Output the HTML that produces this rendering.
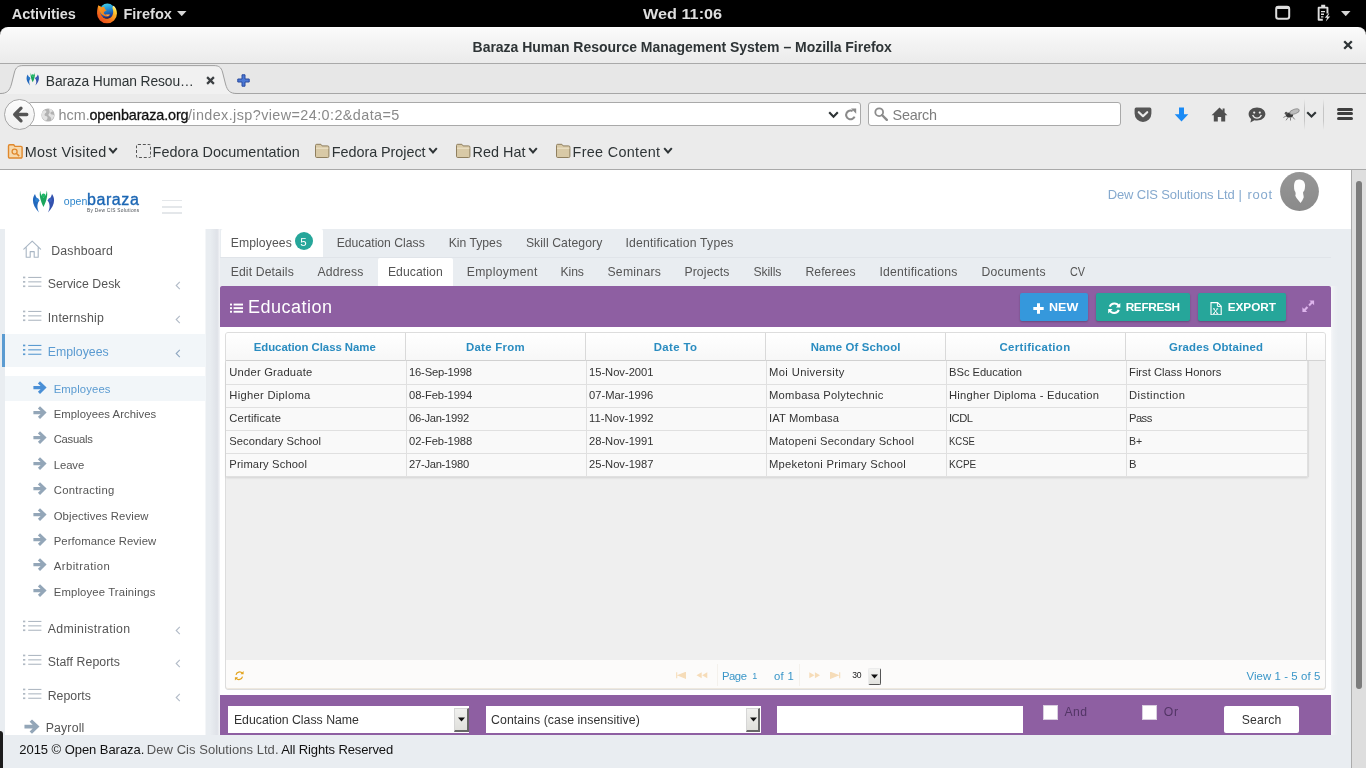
<!DOCTYPE html>
<html lang="en">
<head>
<meta charset="utf-8">
<title>Baraza Human Resource Management System</title>
<style>
html,body{margin:0;padding:0;}
body{width:1366px;height:768px;overflow:hidden;position:relative;background:#e9edf2;font-family:"Liberation Sans",sans-serif;}
div,svg,span{position:absolute;box-sizing:border-box;}
.t{white-space:nowrap;line-height:1;font-family:"Liberation Sans",sans-serif;}
#L{left:0;top:0;width:1366px;height:768px;will-change:transform;}
</style>
</head>
<body>
<div id="L">
<div style="left:0px;top:0px;width:1366px;height:40px;background:#000;"></div>
<span class="t" style="left:11.78px;top:7.18px;font-size:14.5px;color:#dedede;font-weight:700;letter-spacing:-0.042px;">Activities</span><span class="t" style="left:123.48px;top:7.18px;font-size:14.5px;color:#dedede;font-weight:700;letter-spacing:0.010px;">Firefox</span><span class="t" style="left:643.48px;top:7.18px;font-size:14.5px;color:#dedede;font-weight:700;transform:scaleX(1.1193);transform-origin:0 0;">Wed 11:06</span><svg style="left:97px;top:2.5px;" width="21" height="21" viewBox="0 0 21 21">
<defs>
<linearGradient id="ffo" x1="0.1" y1="0.95" x2="0.95" y2="0.1"><stop offset="0" stop-color="#e8431c"/><stop offset="0.4" stop-color="#f4731c"/><stop offset="0.72" stop-color="#fbb024"/><stop offset="0.9" stop-color="#ffe34a"/><stop offset="1" stop-color="#fffbe0"/></linearGradient>
<linearGradient id="ffb" x1="0.35" y1="0" x2="0.6" y2="1"><stop offset="0" stop-color="#3fd0ec"/><stop offset="0.45" stop-color="#1c86d0"/><stop offset="0.8" stop-color="#1b3f9a"/><stop offset="1" stop-color="#141a55"/></linearGradient>
<linearGradient id="ffh" x1="0" y1="0" x2="1" y2="1"><stop offset="0" stop-color="#f8a11f"/><stop offset="1" stop-color="#f0701b"/></linearGradient>
</defs>
<circle cx="10.400" cy="8.100" r="7.700" fill="url(#ffb)"/>
<path d="M1.300 2.600 C2.500 3 3.600 3.500 4.500 4.400 C3 6.200 2.800 9 4 11.400 C5.200 14 7.600 15.700 10.200 15.700 C13 15.700 15.200 13.800 15.900 11 C16.400 9 16.300 7 15.500 5.200 C15.300 4.200 15.800 3.200 16.700 2.700 C18.700 4.500 19.950 7.300 19.950 10.400 A9.950 9.950 0 0 1 10 20.350 A9.950 9.950 0 0 1 0.050 10.400 C0.050 7.600 0.450 4.800 1.300 2.600Z" fill="url(#ffo)"/>
<path d="M1.300 2.600 C2.600 3 3.700 3.600 4.600 4.400 C5.600 3.700 6.700 3.700 7.500 4.100 C7.300 5 7.700 5.800 8.400 6.400 L9.700 7.200 C8.700 7.900 7.400 8.300 6.800 9.400 C6.600 10.600 7.600 11.400 9 11.600 C10.600 11.800 12 11.200 13 11.700 C12.200 13.300 10.400 13.900 8.600 13.500 C6.400 13 4.600 11.600 3.400 9.600 C2.400 7.600 1.500 5.200 1.300 2.600Z" fill="url(#ffh)"/>
<path d="M8.800 11.700 C10.400 12 11.900 11.500 12.900 11.800 C12.300 12.400 11.200 12.700 10.200 12.600Z" fill="#ffe07a"/>
</svg>
<svg style="left:177.3px;top:10.8px;" width="9.5" height="5.2" viewBox="0 0 9.5 5.2"><path d="M0 0H9.500L4.750 5.200Z" fill="#d6d6d6"/></svg>
<svg style="left:1275px;top:5px;" width="16" height="15" viewBox="0 0 16 15"><rect x="1.2" y="1.8" width="13" height="12" rx="2.2" fill="none" stroke="#dedede" stroke-width="2"/><rect x="1.2" y="1" width="13" height="3" rx="1.5" fill="#dedede"/></svg>
<svg style="left:1316px;top:4px;" width="16" height="18" viewBox="0 0 16 18"><path d="M5.2 0.8h4v2h2.2a1 1 0 0 1 1 1v5.8h-1.9V4.6H3.6v10.2h3.2v1.9H2.7a1 1 0 0 1-1-1V3.8a1 1 0 0 1 1-1h2.5z" fill="#dedede"/><path d="M5 7h4v1.3H5zM5 9.6h3v1.3H5zM5 12.2h2.4v1.2H5z" fill="#dedede"/><path d="M12.4 9.6l-3.6 4.2h2.3l-1.3 3.6 4.4-4.8h-2.5l1.6-3z" fill="#dedede"/></svg>
<svg style="left:1341.3px;top:10.8px;" width="9.5" height="5.2" viewBox="0 0 9.5 5.2"><path d="M0 0H9.500L4.750 5.200Z" fill="#d6d6d6"/></svg>
<div style="left:0px;top:27px;width:1366px;height:36px;background:linear-gradient(#fbfbfb,#f3f3f3 45%,#ebebeb);border-radius:8px 8px 0 0;border-top:1px solid #fff;"></div>
<div style="left:0px;top:63px;width:1366px;height:1px;background:#a9a9a9;"></div>
<span class="t" style="left:472.60px;top:39.60px;font-size:14px;color:#2e3436;font-weight:700;letter-spacing:-0.030px;">Baraza Human Resource Management System – Mozilla Firefox</span><svg style="left:1343px;top:40px;" width="10" height="10" viewBox="0 0 10 10"><path d="M1.2 1.2L8.8 8.8M8.8 1.2L1.2 8.8" stroke="#2e3436" stroke-width="2.3" fill="none"/></svg>
<div style="left:0px;top:64px;width:1366px;height:29px;background:#e7e7e7;"></div>
<div style="left:0px;top:93px;width:1366px;height:1px;background:#a6a6a6;"></div>
<svg style="left:0px;top:64px;" width="240" height="31" viewBox="0 0 240 31">
<path d="M0 29.5 C7 29.5 9.5 27 11.5 20 L14.5 8 C15.8 3.5 18 1.6 23 1.6 L214 1.6 C219 1.6 221.2 3.5 222.5 8 L225.5 20 C227.5 27 230 29.5 237 29.5 L240 29.5 L240 31 L0 31 Z" fill="#f1f1f1"/>
<path d="M0 29.5 C7 29.5 9.5 27 11.5 20 L14.5 8 C15.8 3.5 18 1.6 23 1.6 L214 1.6 C219 1.6 221.2 3.5 222.5 8 L225.5 20 C227.5 27 230 29.5 237 29.5 L240 29.5" fill="none" stroke="#9f9f9f" stroke-width="1"/>
</svg>
<svg style="left:26px;top:72.3px;" width="13.5" height="14" viewBox="0 0 23 23"><path d="M3 4 C-0.600 8.800 0.400 16.200 7 22.400 C4.600 17.600 5 13.400 7.600 10.200 C5.600 9.400 3.800 7.200 3 4Z" fill="#2268bd"/>
<circle cx="4.900" cy="10" r="2.100" fill="#2b7fd0"/>
<path d="M20 4 C23.600 8.800 22.600 16.200 16 22.400 C18.400 17.600 18 13.400 15.400 10.200 C17.400 9.400 19.200 7.200 20 4Z" fill="#3352ae"/>
<circle cx="18.100" cy="10" r="2.100" fill="#3b60bd"/>
<path d="M8.200 0.800 C8.600 4.400 9.800 6.800 11.500 7.400 C13.200 6.800 14.400 4.400 14.800 0.400 C16.200 5.800 14 11.800 11.500 17 C9 11.800 6.800 5.800 8.200 0.800Z" fill="#1aa55c"/>
<circle cx="11.500" cy="5.600" r="2.200" fill="#1fb868"/></svg>
<span class="t" style="left:45.81px;top:74.77px;font-size:13.8px;color:#2e3436;letter-spacing:-0.084px;">Baraza Human Resou…</span><svg style="left:206px;top:76px;" width="9" height="9" viewBox="0 0 9 9"><path d="M1.1 1.1L7.9 7.9M7.9 1.1L1.1 7.9" stroke="#3c4043" stroke-width="2.2" fill="none"/></svg>
<svg style="left:236.5px;top:73.5px;" width="13" height="13" viewBox="0 0 13 13"><path d="M5 0.8h3v4.2h4.2v3H8v4.2H5V8H0.8V5H5z" fill="#4a78d6" stroke="#2a4a9e" stroke-width="1" stroke-linejoin="round"/></svg>
<div style="left:0px;top:94px;width:1366px;height:41px;background:#ebebeb;"></div>
<div style="left:28px;top:102px;width:833px;height:24px;background:#fff;border:1px solid #a9a9a9;border-radius:3px;"></div>
<div style="left:4px;top:98.5px;width:31px;height:31px;background:linear-gradient(#fdfdfd,#efefef);border:1px solid #a8a8a8;border-radius:50%;"></div>
<svg style="left:11.5px;top:104.5px;" width="19" height="19" viewBox="0 0 19 19"><path d="M14.800 9.500H3.600M9 3.200L2.700 9.500L9 15.800" stroke="#555" stroke-width="3.300" fill="none" stroke-linecap="round" stroke-linejoin="round"/></svg>
<svg style="left:41px;top:107.5px;" width="14" height="14" viewBox="0 0 14 14"><circle cx="7" cy="7" r="6.6" fill="#b2b2b2"/><path d="M3 2.2c1.4-.2 2.6.6 2.4 1.8-.2 1-1.6 1.2-1.8 2.4-.2 1 .8 1.6 1.8 1.8 1 .2 1.4 1.2 1 2.4-.3.9-1 1.6-1.4 2.2C2.6 12 .6 9.6.6 7c0-2 1-3.800 2.400-4.800zM8.200.8c1.600.2 3 1.200 3.800 2.400-.8.600-1.800.400-2.400 1.200-.600.800.200 1.800 1.200 2 .8.200 1.800.200 2.400.800-.200 2-1.400 3.800-3.200 4.800.400-1.200.200-2.200-.600-3-.8-.8-2-1-2-2.200 0-1 1-1.400 1.200-2.400C8.800 3.200 8 2.200 8.200.8z" fill="#e2e2e2"/></svg>
<span class="t" style="left:58.58px;top:108.01px;font-size:14.4px;color:#8a8a8a;letter-spacing:0.036px;">hcm.</span><span class="t" style="left:89.48px;top:108.01px;font-size:14.4px;color:#111;letter-spacing:-0.132px;-webkit-text-stroke:0.3px #111;">openbaraza.org</span><span class="t" style="left:187.88px;top:108.01px;font-size:14.4px;color:#8a8a8a;letter-spacing:0.406px;">/index.jsp?view=24:0:2&amp;data=5</span><svg style="left:828px;top:110.5px;" width="11" height="8" viewBox="0 0 11 8"><path d="M1.2 1.2L5.5 5.8L9.8 1.2" stroke="#2e3436" stroke-width="2.1" fill="none"/></svg>
<svg style="left:843.5px;top:107.5px;" width="13" height="13" viewBox="0 0 13 13"><path d="M10.6 8.6A4.4 4.4 0 1 1 8.6 3" stroke="#8a8a8a" stroke-width="2" fill="none"/><path d="M7 0.6h5.2v5.200z" fill="#8a8a8a"/></svg>
<div style="left:868px;top:102px;width:253px;height:24px;background:#fff;border:1px solid #a9a9a9;border-radius:3px;"></div>
<svg style="left:873.5px;top:107px;" width="14" height="14" viewBox="0 0 14 14"><circle cx="5.2" cy="5.2" r="3.9" stroke="#8c8c8c" stroke-width="1.8" fill="none"/><path d="M8 8L12.8 12.8" stroke="#8c8c8c" stroke-width="2.4" stroke-linecap="round"/></svg>
<span class="t" style="left:892.58px;top:107.81px;font-size:14.4px;color:#7d7d7d;letter-spacing:-0.223px;">Search</span><svg style="left:1134px;top:107px;" width="18" height="15" viewBox="0 0 18 15"><path d="M2.2 0.6h13.600a1.600 1.600 0 0 1 1.600 1.600v4.300a8.400 8.400 0 0 1-16.800 0V2.200A1.600 1.600 0 0 1 2.200.6z" fill="#565656"/><path d="M4.800 5.200L9 9.200L13.200 5.200" stroke="#ebebeb" stroke-width="2.2" fill="none" stroke-linecap="round" stroke-linejoin="round"/></svg>
<svg style="left:1173.5px;top:107px;" width="15" height="15" viewBox="0 0 15 15"><path d="M5 0.4h5v6.800h4.300L7.500 14.600L.7 7.200H5z" fill="#1a8af5"/></svg>
<svg style="left:1210.5px;top:107px;" width="17" height="15" viewBox="0 0 17 15"><path d="M8.500.6L.6 8.200h2.200v6.400h4V10h3.400v4.600h4V8.200h2.200L13.600 5.600V1.600h-2v2z" fill="#4f4f4f"/></svg>
<svg style="left:1248px;top:107px;" width="18" height="16" viewBox="0 0 18 16"><path d="M9 .6c4.600 0 8.400 2.900 8.400 6.500S13.600 13.600 9 13.600c-.9 0-1.800-.1-2.600-.300L2.400 15.600l.8-3.500C1.600 10.900.6 9.100.6 7.100.6 3.500 4.400.6 9 .6z" fill="#4f4f4f"/><circle cx="6.200" cy="5.600" r="1.100" fill="#ebebeb"/><circle cx="11.800" cy="5.600" r="1.100" fill="#ebebeb"/><path d="M4.600 8c1 2.200 2.600 3.200 4.400 3.200s3.400-1 4.400-3.200" stroke="#ebebeb" stroke-width="1.300" fill="none"/></svg>
<svg style="left:1283px;top:107px;" width="18" height="14" viewBox="0 0 18 14"><ellipse cx="6.500" cy="8" rx="3.600" ry="2.600" fill="#3a3a3a"/><ellipse cx="11.500" cy="4.600" rx="5" ry="2.300" fill="#bdbdbd" stroke="#777" stroke-width=".6" transform="rotate(-18 11.500 4.600)"/><circle cx="3.200" cy="6.200" r="1.500" fill="#555"/><path d="M5 10.500l-2 2.800M7.500 10.700l0 2.800M9.500 9.800l2.200 2.600M3 9l-2.600 1.500" stroke="#666" stroke-width=".8" fill="none"/></svg>
<div style="left:1304px;top:99px;width:1px;height:31px;background:linear-gradient(rgba(0,0,0,0),#c6c6c6 30%,#c6c6c6 70%,rgba(0,0,0,0));"></div>
<svg style="left:1305.5px;top:110.5px;" width="11" height="8" viewBox="0 0 11 8"><path d="M1.200 1.200L5.500 5.600L9.800 1.200" stroke="#2e3436" stroke-width="2.100" fill="none"/></svg>
<div style="left:1323px;top:99px;width:1px;height:31px;background:linear-gradient(rgba(0,0,0,0),#c6c6c6 30%,#c6c6c6 70%,rgba(0,0,0,0));"></div>
<div style="left:1337px;top:107.5px;width:16px;height:3px;background:#3f3f3f;border-radius:1.5px;"></div>
<div style="left:1337px;top:112.3px;width:16px;height:3px;background:#3f3f3f;border-radius:1.5px;"></div>
<div style="left:1337px;top:117.1px;width:16px;height:3px;background:#3f3f3f;border-radius:1.5px;"></div>
<div style="left:0px;top:135px;width:1366px;height:34px;background:#ebebeb;"></div>
<div style="left:0px;top:169px;width:1366px;height:1px;background:#a9a9a9;"></div>
<svg style="left:6.5px;top:142.6px;" width="17" height="16" viewBox="0 0 17 16"><path d="M1.500 3a1.200 1.200 0 0 1 1.200-1.200h4l1.200 1.600h6a1.200 1.200 0 0 1 1.200 1.200v9.200a1.200 1.200 0 0 1-1.200 1.200H2.700a1.200 1.200 0 0 1-1.200-1.200z" fill="#f7d9ad" stroke="#e0882c" stroke-width="1.400"/><circle cx="7.600" cy="8.600" r="2.500" fill="none" stroke="#e0882c" stroke-width="1.300"/><path d="M9.500 10.500l2.700 2.600" stroke="#e0882c" stroke-width="1.500"/></svg>
<span class="t" style="left:24.78px;top:145.11px;font-size:14.4px;color:#2e3436;letter-spacing:0.306px;">Most Visited</span><svg style="left:108px;top:147.2px;" width="10" height="7" viewBox="0 0 10 7"><path d="M1.200 1.200L5 5.400L8.800 1.200" stroke="#2e3436" stroke-width="2" fill="none"/></svg>
<div style="left:136px;top:143.6px;width:14.5px;height:14px;border:1px dashed #555;border-radius:2px;"></div>
<span class="t" style="left:152.58px;top:145.11px;font-size:14.4px;color:#2e3436;letter-spacing:0.048px;">Fedora Documentation</span><svg style="left:313.5px;top:143.1px;" width="17" height="16" viewBox="0 0 17 16"><path d="M1.500 2.500a1.200 1.200 0 0 1 1.200-1.200h4.200l1.200 1.600h5.600a1.200 1.200 0 0 1 1.200 1.200v9.200a1.200 1.200 0 0 1-1.200 1.200H2.700a1.200 1.200 0 0 1-1.200-1.200z" fill="#d8c9a6" stroke="#8f7f5e" stroke-width="1"/><path d="M2 5.200h12.400" stroke="#f0e6cc" stroke-width="1"/></svg>
<span class="t" style="left:331.78px;top:145.11px;font-size:14.4px;color:#2e3436;letter-spacing:-0.046px;">Fedora Project</span><svg style="left:428px;top:147.2px;" width="10" height="7" viewBox="0 0 10 7"><path d="M1.200 1.200L5 5.400L8.800 1.200" stroke="#2e3436" stroke-width="2" fill="none"/></svg>
<svg style="left:454.5px;top:143.1px;" width="17" height="16" viewBox="0 0 17 16"><path d="M1.500 2.500a1.200 1.200 0 0 1 1.200-1.200h4.200l1.200 1.600h5.600a1.200 1.200 0 0 1 1.200 1.200v9.200a1.200 1.200 0 0 1-1.200 1.200H2.700a1.200 1.200 0 0 1-1.200-1.200z" fill="#d8c9a6" stroke="#8f7f5e" stroke-width="1"/><path d="M2 5.200h12.400" stroke="#f0e6cc" stroke-width="1"/></svg>
<span class="t" style="left:472.58px;top:145.11px;font-size:14.4px;color:#2e3436;letter-spacing:0.033px;">Red Hat</span><svg style="left:528px;top:147.2px;" width="10" height="7" viewBox="0 0 10 7"><path d="M1.200 1.200L5 5.400L8.800 1.200" stroke="#2e3436" stroke-width="2" fill="none"/></svg>
<svg style="left:554.5px;top:143.1px;" width="17" height="16" viewBox="0 0 17 16"><path d="M1.500 2.500a1.200 1.200 0 0 1 1.200-1.200h4.200l1.200 1.600h5.600a1.200 1.200 0 0 1 1.200 1.200v9.200a1.200 1.200 0 0 1-1.200 1.200H2.700a1.200 1.200 0 0 1-1.200-1.200z" fill="#d8c9a6" stroke="#8f7f5e" stroke-width="1"/><path d="M2 5.200h12.400" stroke="#f0e6cc" stroke-width="1"/></svg>
<span class="t" style="left:572.58px;top:145.11px;font-size:14.4px;color:#2e3436;letter-spacing:0.318px;">Free Content</span><svg style="left:662.5px;top:147.2px;" width="10" height="7" viewBox="0 0 10 7"><path d="M1.200 1.200L5 5.400L8.800 1.200" stroke="#2e3436" stroke-width="2" fill="none"/></svg>
<div style="left:0px;top:170px;width:1351px;height:598px;background:#e9edf1;"></div>
<div style="left:0px;top:170px;width:1351px;height:59px;background:#fff;"></div>
<svg style="left:31.5px;top:190px;" width="23" height="23" viewBox="0 0 23 23"><path d="M3 4 C-0.600 8.800 0.400 16.200 7 22.400 C4.600 17.600 5 13.400 7.600 10.200 C5.600 9.400 3.800 7.200 3 4Z" fill="#2268bd"/>
<circle cx="4.900" cy="10" r="1.900" fill="#2b7fd0"/>
<path d="M20 4 C23.600 8.800 22.600 16.200 16 22.400 C18.400 17.600 18 13.400 15.400 10.200 C17.400 9.400 19.200 7.200 20 4Z" fill="#3352ae"/>
<circle cx="18.100" cy="10" r="1.900" fill="#3b60bd"/>
<path d="M8.200 0.800 C8.600 4.400 9.800 6.800 11.500 7.400 C13.200 6.800 14.400 4.400 14.800 0.400 C16.200 5.800 14 11.800 11.500 17 C9 11.800 6.800 5.800 8.200 0.800Z" fill="#1aa55c"/>
<circle cx="11.500" cy="5.600" r="2" fill="#1fb868"/></svg>
<span class="t" style="left:63.68px;top:196.21px;font-size:10.5px;color:#2e86cc;letter-spacing:0.129px;">open</span><span class="t" style="left:86.90px;top:191.56px;font-size:16px;color:#1b66b4;letter-spacing:0.604px;-webkit-text-stroke:0.35px #1b66b4;">baraza</span><span class="t" style="left:87.06px;top:208.84px;font-size:4.8px;color:#4a4f55;letter-spacing:0.273px;">By Dew CIS Solutions</span><div style="left:162.3px;top:199.7px;width:19.7px;height:1.8px;background:#e4e7ea;"></div>
<div style="left:162.3px;top:206px;width:19.7px;height:1.8px;background:#e4e7ea;"></div>
<div style="left:162.3px;top:212.2px;width:19.7px;height:1.8px;background:#e4e7ea;"></div>
<span class="t" style="left:1107.65px;top:188.45px;font-size:13px;color:#85a9ce;letter-spacing:-0.150px;">Dew CIS Solutions Ltd</span><span class="t" style="left:1238.55px;top:188.45px;font-size:13px;color:#85a9ce;">|</span><span class="t" style="left:1247.45px;top:188.45px;font-size:13px;color:#85a9ce;letter-spacing:0.788px;">root</span><svg style="left:1280px;top:172px;" width="39" height="39" viewBox="0 0 39 39"><defs><linearGradient id="avg" x1="0" y1="0" x2="0" y2="1"><stop offset="0" stop-color="#969696"/><stop offset="1" stop-color="#8a8a8a"/></linearGradient></defs>
<circle cx="19.500" cy="19.500" r="19.400" fill="url(#avg)"/>
<path d="M18.800 7.500 C21 7.300 23.300 8.200 24.400 10.400 C25.100 12 25.200 13.600 25 14.800 C24.900 16.400 24.700 17.800 24.100 19.100 C23.200 19.600 23 20.400 23.100 21 C23.200 22.600 23.800 24 23.700 25.400 C22.900 27.400 21.800 29.200 20.600 31 C19.300 29.600 18.100 28.100 16.900 26.600 C16.200 25.600 15.500 24.600 15.300 23.500 C15.500 22.600 15.800 21.800 15.600 21 C15.500 20.200 15.100 19.600 14.700 19.100 C14.200 17.700 14 16.200 14.050 14.750 C14 12.800 14.200 10.800 15 9.400 C15.900 8.200 17.300 7.600 18.800 7.500Z" fill="#fdfdfd"/></svg>
<div style="left:5px;top:229px;width:200px;height:506px;background:#fff;"></div>
<div style="left:205px;top:229px;width:1px;height:506px;background:#f4f6f8;"></div>
<div style="left:210px;top:229px;width:10px;height:506px;background:linear-gradient(90deg,#e9edf1 0%,#dfe2e8 72%,#e6e8ed 82%,#f5f6f9 100%);"></div>
<svg style="left:23px;top:240px;" width="18.5" height="18.5" viewBox="0 0 18.5 18.5"><path d="M0.800 9.200L9.200 1.200L17.600 9.200M3.200 7.600V17.200H7.200V11.600H11.200V17.200H15.200V7.600" stroke="#a9b6c4" stroke-width="1.100" fill="none" stroke-linejoin="round" stroke-linecap="round"/></svg>
<span class="t" style="left:51.18px;top:245.29px;font-size:12.3px;color:#555;letter-spacing:0.204px;">Dashboard</span><div style="left:5px;top:333.7px;width:200.5px;height:33.8px;background:#f2f6f9;"></div>
<div style="left:2px;top:333.7px;width:3px;height:33.8px;background:#5b9bd1;"></div>
<div style="left:5px;top:376.2px;width:200.5px;height:24.5px;background:#f2f6f9;"></div>
<svg style="left:23px;top:275.8px;" width="18.5" height="13" viewBox="0 0 18.5 13"><rect x="0" y="0.60" width="2.300" height="1.700" fill="#b0b9c3"/><rect x="5.200" y="0.90" width="13.200" height="1.100" fill="#b0b9c3"/><rect x="0" y="5.00" width="2.300" height="1.700" fill="#b0b9c3"/><rect x="5.200" y="5.30" width="13.200" height="1.100" fill="#b0b9c3"/><rect x="0" y="9.40" width="2.300" height="1.700" fill="#b0b9c3"/><rect x="5.200" y="9.70" width="13.200" height="1.100" fill="#b0b9c3"/></svg>
<span class="t" style="left:47.68px;top:278.29px;font-size:12.3px;color:#555;letter-spacing:0.034px;">Service Desk</span><svg style="left:175.2px;top:281.3px;" width="6" height="9" viewBox="0 0 6 9"><path d="M4.800 0.800L1.200 4.500L4.800 8.200" stroke="#b2bbc7" stroke-width="1.100" fill="none"/></svg>
<svg style="left:23px;top:309.8px;" width="18.5" height="13" viewBox="0 0 18.5 13"><rect x="0" y="0.60" width="2.300" height="1.700" fill="#b0b9c3"/><rect x="5.200" y="0.90" width="13.200" height="1.100" fill="#b0b9c3"/><rect x="0" y="5.00" width="2.300" height="1.700" fill="#b0b9c3"/><rect x="5.200" y="5.30" width="13.200" height="1.100" fill="#b0b9c3"/><rect x="0" y="9.40" width="2.300" height="1.700" fill="#b0b9c3"/><rect x="5.200" y="9.70" width="13.200" height="1.100" fill="#b0b9c3"/></svg>
<span class="t" style="left:47.68px;top:312.29px;font-size:12.3px;color:#555;letter-spacing:0.232px;">Internship</span><svg style="left:175.2px;top:315.3px;" width="6" height="9" viewBox="0 0 6 9"><path d="M4.800 0.800L1.200 4.500L4.800 8.200" stroke="#b2bbc7" stroke-width="1.100" fill="none"/></svg>
<svg style="left:23px;top:343.55px;" width="18.5" height="13" viewBox="0 0 18.5 13"><rect x="0" y="0.60" width="2.300" height="1.700" fill="#5b9bd1"/><rect x="5.200" y="0.90" width="13.200" height="1.100" fill="#5b9bd1"/><rect x="0" y="5.00" width="2.300" height="1.700" fill="#5b9bd1"/><rect x="5.200" y="5.30" width="13.200" height="1.100" fill="#5b9bd1"/><rect x="0" y="9.40" width="2.300" height="1.700" fill="#5b9bd1"/><rect x="5.200" y="9.70" width="13.200" height="1.100" fill="#5b9bd1"/></svg>
<span class="t" style="left:47.68px;top:346.04px;font-size:12.3px;color:#5b9bd1;letter-spacing:0.033px;">Employees</span><svg style="left:175.2px;top:349.05px;" width="6" height="9" viewBox="0 0 6 9"><path d="M4.800 0.800L1.200 4.500L4.800 8.200" stroke="#8fa7c0" stroke-width="1.100" fill="none"/></svg>
<svg style="left:23px;top:620.3px;" width="18.5" height="13" viewBox="0 0 18.5 13"><rect x="0" y="0.60" width="2.300" height="1.700" fill="#b0b9c3"/><rect x="5.200" y="0.90" width="13.200" height="1.100" fill="#b0b9c3"/><rect x="0" y="5.00" width="2.300" height="1.700" fill="#b0b9c3"/><rect x="5.200" y="5.30" width="13.200" height="1.100" fill="#b0b9c3"/><rect x="0" y="9.40" width="2.300" height="1.700" fill="#b0b9c3"/><rect x="5.200" y="9.70" width="13.200" height="1.100" fill="#b0b9c3"/></svg>
<span class="t" style="left:47.68px;top:622.79px;font-size:12.3px;color:#555;letter-spacing:0.337px;">Administration</span><svg style="left:175.2px;top:625.8px;" width="6" height="9" viewBox="0 0 6 9"><path d="M4.800 0.800L1.200 4.500L4.800 8.200" stroke="#b2bbc7" stroke-width="1.100" fill="none"/></svg>
<svg style="left:23px;top:653.55px;" width="18.5" height="13" viewBox="0 0 18.5 13"><rect x="0" y="0.60" width="2.300" height="1.700" fill="#b0b9c3"/><rect x="5.200" y="0.90" width="13.200" height="1.100" fill="#b0b9c3"/><rect x="0" y="5.00" width="2.300" height="1.700" fill="#b0b9c3"/><rect x="5.200" y="5.30" width="13.200" height="1.100" fill="#b0b9c3"/><rect x="0" y="9.40" width="2.300" height="1.700" fill="#b0b9c3"/><rect x="5.200" y="9.70" width="13.200" height="1.100" fill="#b0b9c3"/></svg>
<span class="t" style="left:47.68px;top:656.04px;font-size:12.3px;color:#555;letter-spacing:0.063px;">Staff Reports</span><svg style="left:175.2px;top:659.05px;" width="6" height="9" viewBox="0 0 6 9"><path d="M4.800 0.800L1.200 4.500L4.800 8.200" stroke="#b2bbc7" stroke-width="1.100" fill="none"/></svg>
<svg style="left:23px;top:687.8px;" width="18.5" height="13" viewBox="0 0 18.5 13"><rect x="0" y="0.60" width="2.300" height="1.700" fill="#b0b9c3"/><rect x="5.200" y="0.90" width="13.200" height="1.100" fill="#b0b9c3"/><rect x="0" y="5.00" width="2.300" height="1.700" fill="#b0b9c3"/><rect x="5.200" y="5.30" width="13.200" height="1.100" fill="#b0b9c3"/><rect x="0" y="9.40" width="2.300" height="1.700" fill="#b0b9c3"/><rect x="5.200" y="9.70" width="13.200" height="1.100" fill="#b0b9c3"/></svg>
<span class="t" style="left:47.68px;top:690.29px;font-size:12.3px;color:#555;letter-spacing:0.041px;">Reports</span><svg style="left:175.2px;top:693.3px;" width="6" height="9" viewBox="0 0 6 9"><path d="M4.800 0.800L1.200 4.500L4.800 8.200" stroke="#b2bbc7" stroke-width="1.100" fill="none"/></svg>
<svg style="left:32.5px;top:380.8px;" width="14" height="13.2" viewBox="0 0 14 13.2"><path d="M7 0.300L13.600 6.600L7 12.900L4.900 10.800L7.600 8.200H0.400V5H7.600L4.900 2.400Z" fill="#4a8fd6"/></svg>
<span class="t" style="left:53.73px;top:383.63px;font-size:11.3px;color:#5b9bd1;letter-spacing:0.103px;">Employees</span><svg style="left:32.5px;top:406.3px;" width="14" height="13.2" viewBox="0 0 14 13.2"><path d="M7 0.300L13.600 6.600L7 12.900L4.900 10.800L7.600 8.200H0.400V5H7.600L4.900 2.400Z" fill="#93a6b8"/></svg>
<span class="t" style="left:53.73px;top:409.13px;font-size:11.3px;color:#555;letter-spacing:0.047px;">Employees Archives</span><svg style="left:32.5px;top:431.3px;" width="14" height="13.2" viewBox="0 0 14 13.2"><path d="M7 0.300L13.600 6.600L7 12.900L4.900 10.800L7.600 8.200H0.400V5H7.600L4.900 2.400Z" fill="#93a6b8"/></svg>
<span class="t" style="left:53.73px;top:434.13px;font-size:11.3px;color:#555;letter-spacing:-0.269px;">Casuals</span><svg style="left:32.5px;top:457.05px;" width="14" height="13.2" viewBox="0 0 14 13.2"><path d="M7 0.300L13.600 6.600L7 12.900L4.900 10.800L7.600 8.200H0.400V5H7.600L4.900 2.400Z" fill="#93a6b8"/></svg>
<span class="t" style="left:53.73px;top:459.88px;font-size:11.3px;color:#555;letter-spacing:-0.066px;">Leave</span><svg style="left:32.5px;top:482.05px;" width="14" height="13.2" viewBox="0 0 14 13.2"><path d="M7 0.300L13.600 6.600L7 12.900L4.900 10.800L7.600 8.200H0.400V5H7.600L4.900 2.400Z" fill="#93a6b8"/></svg>
<span class="t" style="left:53.73px;top:484.88px;font-size:11.3px;color:#555;letter-spacing:0.274px;">Contracting</span><svg style="left:32.5px;top:507.8px;" width="14" height="13.2" viewBox="0 0 14 13.2"><path d="M7 0.300L13.600 6.600L7 12.900L4.900 10.800L7.600 8.200H0.400V5H7.600L4.900 2.400Z" fill="#93a6b8"/></svg>
<span class="t" style="left:53.73px;top:510.63px;font-size:11.3px;color:#555;letter-spacing:0.112px;">Objectives Review</span><svg style="left:32.5px;top:533.3px;" width="14" height="13.2" viewBox="0 0 14 13.2"><path d="M7 0.300L13.600 6.600L7 12.900L4.900 10.800L7.600 8.200H0.400V5H7.600L4.900 2.400Z" fill="#93a6b8"/></svg>
<span class="t" style="left:53.73px;top:536.13px;font-size:11.3px;color:#555;letter-spacing:0.089px;">Perfomance Review</span><svg style="left:32.5px;top:558.3px;" width="14" height="13.2" viewBox="0 0 14 13.2"><path d="M7 0.300L13.600 6.600L7 12.900L4.900 10.800L7.600 8.200H0.400V5H7.600L4.900 2.400Z" fill="#93a6b8"/></svg>
<span class="t" style="left:53.73px;top:561.13px;font-size:11.3px;color:#555;letter-spacing:0.452px;">Arbitration</span><svg style="left:32.5px;top:584.05px;" width="14" height="13.2" viewBox="0 0 14 13.2"><path d="M7 0.300L13.600 6.600L7 12.900L4.900 10.800L7.600 8.200H0.400V5H7.600L4.900 2.400Z" fill="#93a6b8"/></svg>
<span class="t" style="left:53.73px;top:586.88px;font-size:11.3px;color:#555;letter-spacing:0.147px;">Employee Trainings</span><svg style="left:23.7px;top:718.6px;" width="16" height="15.2" viewBox="0 0 14 13.200"><path d="M7 0.300L13.600 6.600L7 12.900L4.900 10.800L7.600 8.200H0.400V5H7.600L4.900 2.400Z" fill="#93a6b8"/></svg>
<span class="t" style="left:45.68px;top:722.04px;font-size:12.3px;color:#555;letter-spacing:0.169px;">Payroll</span><div style="left:220px;top:256.5px;width:1111px;height:1px;background:#e0e4e9;"></div>
<div style="left:221px;top:229px;width:101.5px;height:28px;background:#fff;border-radius:2px 2px 0 0;"></div>
<span class="t" style="left:230.69px;top:237.37px;font-size:12.2px;color:#555;letter-spacing:0.100px;">Employees</span><div style="left:295px;top:232.3px;width:18px;height:18px;background:#26a69a;border-radius:50%;"></div>
<span class="t" style="left:300.23px;top:236.97px;font-size:11.5px;color:#fff;">5</span><span class="t" style="left:336.69px;top:237.37px;font-size:12.2px;color:#555;">Education Class</span><span class="t" style="left:448.69px;top:237.37px;font-size:12.2px;color:#555;">Kin Types</span><span class="t" style="left:525.89px;top:237.37px;font-size:12.2px;color:#555;letter-spacing:0.093px;">Skill Category</span><span class="t" style="left:625.39px;top:237.37px;font-size:12.2px;color:#555;letter-spacing:0.209px;">Identification Types</span><div style="left:378px;top:257.5px;width:75px;height:29px;background:#fff;border-radius:2px 2px 0 0;"></div>
<span class="t" style="left:230.69px;top:266.12px;font-size:12.2px;color:#555;letter-spacing:0.132px;">Edit Details</span><span class="t" style="left:317.39px;top:266.12px;font-size:12.2px;color:#555;letter-spacing:0.230px;">Address</span><span class="t" style="left:387.89px;top:266.12px;font-size:12.2px;color:#555;letter-spacing:0.085px;">Education</span><span class="t" style="left:466.69px;top:266.12px;font-size:12.2px;color:#555;letter-spacing:0.318px;">Employment</span><span class="t" style="left:560.39px;top:266.12px;font-size:12.2px;color:#555;letter-spacing:-0.040px;">Kins</span><span class="t" style="left:607.39px;top:266.12px;font-size:12.2px;color:#555;letter-spacing:0.302px;">Seminars</span><span class="t" style="left:684.39px;top:266.12px;font-size:12.2px;color:#555;letter-spacing:0.152px;">Projects</span><span class="t" style="left:753.39px;top:266.12px;font-size:12.2px;color:#555;letter-spacing:-0.071px;">Skills</span><span class="t" style="left:805.39px;top:266.12px;font-size:12.2px;color:#555;letter-spacing:0.092px;">Referees</span><span class="t" style="left:879.39px;top:266.12px;font-size:12.2px;color:#555;letter-spacing:0.255px;">Identifications</span><span class="t" style="left:981.39px;top:266.12px;font-size:12.2px;color:#555;letter-spacing:0.307px;">Documents</span><span class="t" style="left:1069.89px;top:266.12px;font-size:12.2px;color:#555;transform:scaleX(0.8914);transform-origin:0 0;">CV</span><div style="left:1331px;top:286.2px;width:7px;height:449px;background:linear-gradient(90deg,#f6f7f9 0%,#eef1f4 35%,#e9edf1 100%);"></div>
<div style="left:220px;top:286.2px;width:1111px;height:449px;background:#fff;"></div>
<div style="left:220px;top:286.2px;width:1111px;height:40.4px;background:#8e5fa2;border-radius:2px 2px 0 0;"></div>
<svg style="left:230px;top:303.3px;" width="13.5" height="10" viewBox="0 0 13.5 10"><rect x="0" y="0.60" width="2" height="1.900" fill="#fff"/><rect x="3.600" y="0.60" width="9.400" height="1.900" fill="#fff"/><rect x="0" y="4.20" width="2" height="1.900" fill="#fff"/><rect x="3.600" y="4.20" width="9.400" height="1.900" fill="#fff"/><rect x="0" y="7.80" width="2" height="1.900" fill="#fff"/><rect x="3.600" y="7.80" width="9.400" height="1.900" fill="#fff"/></svg>
<span class="t" style="left:247.90px;top:297.96px;font-size:18px;color:#fff;letter-spacing:0.507px;">Education</span><div style="left:1020px;top:293.2px;width:68px;height:28px;background:#3598dc;border-radius:2px;box-shadow:0 1px 2px rgba(0,0,0,.25);"></div>
<svg style="left:1032.5px;top:302.5px;" width="11" height="11" viewBox="0 0 11 11"><path d="M4 0.300h3v3.700h3.700v3h-3.700v3.700h-3v-3.700h-3.700v-3h3.700z" fill="#fff"/></svg>
<span class="t" style="left:1048.71px;top:302.31px;font-size:11.8px;color:#fff;font-weight:700;transform:scaleX(1.0629);transform-origin:0 0;">NEW</span><div style="left:1096.2px;top:293.2px;width:93.79999999999995px;height:28px;background:#26a69a;border-radius:2px;box-shadow:0 1px 2px rgba(0,0,0,.25);"></div>
<svg style="left:1108px;top:302.3px;" width="12.5" height="12.5" viewBox="0 0 12.5 12.5"><path d="M10.900 4.300A5 5 0 0 0 1.700 4.600" stroke="#fff" stroke-width="2" fill="none"/><path d="M12.300 1v4.400h-4.400z" fill="#fff"/><path d="M1.600 8.200A5 5 0 0 0 10.800 7.900" stroke="#fff" stroke-width="2" fill="none"/><path d="M.2 11.500v-4.400h4.400z" fill="#fff"/></svg>
<span class="t" style="left:1125.71px;top:302.31px;font-size:11.8px;color:#fff;font-weight:700;letter-spacing:-0.352px;">REFRESH</span><div style="left:1198px;top:293.2px;width:87.79999999999995px;height:28px;background:#26a69a;border-radius:2px;box-shadow:0 1px 2px rgba(0,0,0,.25);"></div>
<svg style="left:1210.3px;top:301.8px;" width="12" height="13.5" viewBox="0 0 12 13.5"><path d="M1 .6h6.600l3.600 3.600v8.600H1z" fill="none" stroke="#fff" stroke-width="1.100"/><path d="M7.400.8v3.600h3.600" fill="none" stroke="#fff" stroke-width="1"/><path d="M3.800 6.800l3.600 4.600M7.400 6.800l-3.600 4.600M3 6.800h1.800M6.400 6.800h1.800M3 11.400h1.800M6.400 11.400h1.800" stroke="#fff" stroke-width=".9" fill="none"/></svg>
<span class="t" style="left:1227.71px;top:302.31px;font-size:11.8px;color:#fff;font-weight:700;letter-spacing:-0.051px;">EXPORT</span><svg style="left:1302px;top:300px;" width="12.5" height="12.5" viewBox="0 0 12.5 12.5"><path d="M7.200 0.400h4.900v4.900l-1.700-1.700-2.600 2.600-1.500-1.500 2.600-2.600zM5.300 12.100H0.400V7.200l1.700 1.700 2.600-2.600 1.500 1.500-2.600 2.600z" fill="#ddb4ec"/></svg>
<div style="left:225px;top:332px;width:1100.5px;height:357.5px;background:#efefef;border:1px solid #ddd;border-radius:3px;"></div>
<div style="left:226px;top:333px;width:1098.5px;height:28px;background:linear-gradient(#fff,#f7f7f7);border-bottom:1px solid #d3d3d3;border-radius:2px 2px 0 0;"></div>
<div style="left:405.0px;top:332.5px;width:1px;height:28px;background:#d9d9d9;"></div>
<div style="left:585.0px;top:332.5px;width:1px;height:28px;background:#d9d9d9;"></div>
<div style="left:765.0px;top:332.5px;width:1px;height:28px;background:#d9d9d9;"></div>
<div style="left:945.0px;top:332.5px;width:1px;height:28px;background:#d9d9d9;"></div>
<div style="left:1125.0px;top:332.5px;width:1px;height:28px;background:#d9d9d9;"></div>
<div style="left:1306.0px;top:332.5px;width:1px;height:28px;background:#d9d9d9;"></div>
<span class="t" style="left:253.73px;top:342.05px;font-size:11.4px;color:#2a8cc0;font-weight:700;letter-spacing:-0.041px;">Education Class Name</span><span class="t" style="left:465.93px;top:342.05px;font-size:11.4px;color:#2a8cc0;font-weight:700;letter-spacing:0.310px;">Date From</span><span class="t" style="left:653.73px;top:342.05px;font-size:11.4px;color:#2a8cc0;font-weight:700;letter-spacing:0.381px;">Date To</span><span class="t" style="left:810.73px;top:342.05px;font-size:11.4px;color:#2a8cc0;font-weight:700;letter-spacing:0.134px;">Name Of School</span><span class="t" style="left:999.43px;top:342.05px;font-size:11.4px;color:#2a8cc0;font-weight:700;letter-spacing:0.356px;">Certification</span><span class="t" style="left:1168.93px;top:342.05px;font-size:11.4px;color:#2a8cc0;font-weight:700;letter-spacing:0.159px;">Grades Obtained</span><div style="left:226px;top:361px;width:1082px;height:116.1px;background:#f9f9f9;box-shadow:0 1px 2px rgba(0,0,0,.12);"></div>
<div style="left:226px;top:384.1px;width:1082px;height:1px;background:#e0e0e0;"></div>
<div style="left:226px;top:407.1px;width:1082px;height:1px;background:#e0e0e0;"></div>
<div style="left:226px;top:430.1px;width:1082px;height:1px;background:#e0e0e0;"></div>
<div style="left:226px;top:453.1px;width:1082px;height:1px;background:#e0e0e0;"></div>
<div style="left:226px;top:476.1px;width:1082px;height:1px;background:#e0e0e0;"></div>
<div style="left:405.5px;top:361px;width:1px;height:116px;background:#e0e0e0;"></div>
<div style="left:585.5px;top:361px;width:1px;height:116px;background:#e0e0e0;"></div>
<div style="left:765.5px;top:361px;width:1px;height:116px;background:#e0e0e0;"></div>
<div style="left:945.5px;top:361px;width:1px;height:116px;background:#e0e0e0;"></div>
<div style="left:1125.5px;top:361px;width:1px;height:116px;background:#e0e0e0;"></div>
<div style="left:1306.5px;top:361px;width:1px;height:116px;background:#e0e0e0;"></div>
<div style="left:1307.5px;top:361px;width:1px;height:116px;background:#dcdcdc;"></div>
<span class="t" style="left:229.34px;top:366.97px;font-size:11.2px;color:#333;letter-spacing:0.206px;">Under Graduate</span><span class="t" style="left:409.04px;top:366.97px;font-size:11.2px;color:#333;letter-spacing:-0.180px;">16-Sep-1998</span><span class="t" style="left:589.04px;top:366.97px;font-size:11.2px;color:#333;letter-spacing:-0.028px;">15-Nov-2001</span><span class="t" style="left:769.04px;top:366.97px;font-size:11.2px;color:#333;letter-spacing:0.381px;">Moi University</span><span class="t" style="left:949.04px;top:366.97px;font-size:11.2px;color:#333;letter-spacing:-0.040px;">BSc Education</span><span class="t" style="left:1129.04px;top:366.97px;font-size:11.2px;color:#333;letter-spacing:0.011px;">First Class Honors</span><span class="t" style="left:229.34px;top:389.97px;font-size:11.2px;color:#333;letter-spacing:0.292px;">Higher Diploma</span><span class="t" style="left:409.04px;top:389.97px;font-size:11.2px;color:#333;letter-spacing:-0.095px;">08-Feb-1994</span><span class="t" style="left:589.04px;top:389.97px;font-size:11.2px;color:#333;letter-spacing:0.015px;">07-Mar-1996</span><span class="t" style="left:769.04px;top:389.97px;font-size:11.2px;color:#333;letter-spacing:0.264px;">Mombasa Polytechnic</span><span class="t" style="left:949.04px;top:389.97px;font-size:11.2px;color:#333;letter-spacing:0.264px;">Hingher Diploma - Education</span><span class="t" style="left:1129.04px;top:389.97px;font-size:11.2px;color:#333;letter-spacing:0.430px;">Distinction</span><span class="t" style="left:229.34px;top:412.97px;font-size:11.2px;color:#333;letter-spacing:0.123px;">Certificate</span><span class="t" style="left:409.04px;top:412.97px;font-size:11.2px;color:#333;letter-spacing:-0.272px;">06-Jan-1992</span><span class="t" style="left:589.04px;top:412.97px;font-size:11.2px;color:#333;letter-spacing:0.055px;">11-Nov-1992</span><span class="t" style="left:769.04px;top:412.97px;font-size:11.2px;color:#333;letter-spacing:0.130px;">IAT Mombasa</span><span class="t" style="left:949.04px;top:412.97px;font-size:11.2px;color:#333;letter-spacing:-0.531px;">ICDL</span><span class="t" style="left:1129.04px;top:412.97px;font-size:11.2px;color:#333;letter-spacing:-0.556px;">Pass</span><span class="t" style="left:229.34px;top:435.97px;font-size:11.2px;color:#333;letter-spacing:0.053px;">Secondary School</span><span class="t" style="left:409.04px;top:435.97px;font-size:11.2px;color:#333;letter-spacing:-0.095px;">02-Feb-1988</span><span class="t" style="left:589.04px;top:435.97px;font-size:11.2px;color:#333;letter-spacing:-0.028px;">28-Nov-1991</span><span class="t" style="left:769.04px;top:435.97px;font-size:11.2px;color:#333;letter-spacing:0.207px;">Matopeni Secondary School</span><span class="t" style="left:949.04px;top:435.97px;font-size:11.2px;color:#333;transform:scaleX(0.8503);transform-origin:0 0;">KCSE</span><span class="t" style="left:1129.04px;top:435.97px;font-size:11.2px;color:#333;transform:scaleX(0.9434);transform-origin:0 0;">B+</span><span class="t" style="left:229.34px;top:458.97px;font-size:11.2px;color:#333;letter-spacing:0.135px;">Primary School</span><span class="t" style="left:409.04px;top:458.97px;font-size:11.2px;color:#333;letter-spacing:-0.272px;">27-Jan-1980</span><span class="t" style="left:589.04px;top:458.97px;font-size:11.2px;color:#333;letter-spacing:-0.028px;">25-Nov-1987</span><span class="t" style="left:769.04px;top:458.97px;font-size:11.2px;color:#333;letter-spacing:0.267px;">Mpeketoni Primary School</span><span class="t" style="left:949.04px;top:458.97px;font-size:11.2px;color:#333;transform:scaleX(0.8930);transform-origin:0 0;">KCPE</span><span class="t" style="left:1129.04px;top:458.97px;font-size:11.2px;color:#333;">B</span><div style="left:226px;top:660px;width:1098.5px;height:28.8px;background:#fcfbfa;border-bottom:1px solid #eee8de;border-radius:0 0 3px 3px;"></div>
<svg style="left:233.5px;top:669.5px;" width="10.5" height="11.5" viewBox="0 0 10.5 11.5"><path d="M2 4.800A3.600 3.600 0 0 1 8.400 3.400M8.500 6.700A3.600 3.600 0 0 1 2.100 8.100" stroke="#e3a31c" stroke-width="1.200" fill="none"/><path d="M6.400 4.300h3.200V1.100zM4.100 7.200H.9v3.200z" fill="#e3a31c"/></svg>
<svg style="left:675.8px;top:672.4px;" width="10.4" height="6.6" viewBox="0 0 10.4 6.6"><path d="M.7 .3v6M9.900.3L2.400 3.300l7.500 3z" stroke="#f6dcb8" stroke-width="1.100" fill="#f6dcb8"/></svg>
<svg style="left:696px;top:672.4px;" width="11.6" height="6.6" viewBox="0 0 11.6 6.6"><path d="M5.700.3L.5 3.300l5.200 3zM11.300.3L6.100 3.300l5.200 3z" fill="#f6dcb8"/></svg>
<div style="left:717px;top:664px;width:1px;height:22px;background:#f4f1ec;"></div>
<span class="t" style="left:721.93px;top:671.13px;font-size:11.3px;color:#3a96c8;letter-spacing:-0.458px;">Page</span><span class="t" style="left:752.35px;top:672.28px;font-size:9px;color:#3a96c8;">1</span><span class="t" style="left:773.93px;top:671.13px;font-size:11.3px;color:#3a96c8;letter-spacing:0.324px;">of 1</span><div style="left:798.5px;top:664px;width:1px;height:22px;background:#f4f1ec;"></div>
<svg style="left:808.5px;top:672.4px;" width="11.6" height="6.6" viewBox="0 0 11.6 6.6"><path d="M.3.3L5.500 3.300.3 6.300zM5.900.3l5.200 3-5.200 3z" fill="#f6dcb8"/></svg>
<svg style="left:830.3px;top:672.4px;" width="10.4" height="6.6" viewBox="0 0 10.4 6.6"><path d="M9.700.3v6M.5.300L8 3.300.5 6.300z" stroke="#f6dcb8" stroke-width="1.100" fill="#f6dcb8"/></svg>
<span class="t" style="left:852.37px;top:671.42px;font-size:8.6px;color:#222;letter-spacing:-0.289px;">30</span><div style="left:867.5px;top:668px;width:13.3px;height:16.5px;background:linear-gradient(#f4f4f2,#e2e2de);border:1px solid #ececec;border-right:1.5px solid #555;border-bottom:1.5px solid #555;border-radius:2px;"></div>
<svg style="left:870.8px;top:673.5px;" width="7" height="5" viewBox="0 0 7 5"><path d="M0 .5h7L3.500 4.500z" fill="#111"/></svg>
<span class="t" style="left:1246.43px;top:671.25px;font-size:11.4px;color:#3a96c8;letter-spacing:0.087px;">View 1 - 5 of 5</span><div style="left:220px;top:695px;width:1111px;height:40px;background:#8e5fa2;"></div>
<div style="left:228.3px;top:706.2px;width:240.7px;height:26.5px;background:#fff;"></div>
<div style="left:454px;top:707.5px;width:14.5px;height:24.5px;background:linear-gradient(#f0f0ee,#e0e0dc);border:1px solid #d6d6d6;border-right:2px solid #666;border-bottom:2px solid #666;"></div>
<svg style="left:457.7px;top:717px;" width="7" height="5" viewBox="0 0 7 5"><path d="M0 .4h7L3.500 4.600z" fill="#111"/></svg>
<span class="t" style="left:233.88px;top:714.04px;font-size:12.3px;color:#333;">Education Class Name</span><div style="left:485.5px;top:706.2px;width:275.29999999999995px;height:26.5px;background:#fff;"></div>
<div style="left:745.8px;top:707.5px;width:14.5px;height:24.5px;background:linear-gradient(#f0f0ee,#e0e0dc);border:1px solid #d6d6d6;border-right:2px solid #666;border-bottom:2px solid #666;"></div>
<svg style="left:749.5px;top:717px;" width="7" height="5" viewBox="0 0 7 5"><path d="M0 .4h7L3.500 4.600z" fill="#111"/></svg>
<span class="t" style="left:491.08px;top:714.04px;font-size:12.3px;color:#333;letter-spacing:0.067px;">Contains (case insensitive)</span><div style="left:777px;top:706.2px;width:245.8px;height:26.5px;background:#fff;"></div>
<div style="left:1043px;top:704.7px;width:15px;height:15.3px;background:#fff;border:1px solid #d9cfe0;"></div>
<span class="t" style="left:1064.39px;top:706.17px;font-size:12.2px;color:#533566;letter-spacing:0.455px;">And</span><div style="left:1142.2px;top:704.7px;width:15px;height:15.3px;background:#fff;border:1px solid #d9cfe0;"></div>
<span class="t" style="left:1163.69px;top:706.17px;font-size:12.2px;color:#533566;letter-spacing:0.751px;">Or</span><div style="left:1223.8px;top:706px;width:75.5px;height:27px;background:#fff;border-radius:2px;"></div>
<span class="t" style="left:1241.69px;top:713.97px;font-size:12.2px;color:#333;letter-spacing:0.195px;">Search</span><div style="left:0px;top:735px;width:1351px;height:33px;background:#e9edf1;"></div>
<span class="t" style="left:19.35px;top:743.45px;font-size:13px;color:#111;letter-spacing:-0.054px;">2015 © Open Baraza.</span><span class="t" style="left:146.85px;top:743.45px;font-size:13px;color:#555;letter-spacing:0.042px;">Dew Cis Solutions Ltd.</span><span class="t" style="left:281.15px;top:743.45px;font-size:13px;color:#111;letter-spacing:-0.116px;">All Rights Reserved</span><div style="left:-3px;top:731px;width:6px;height:40px;background:#1c1c1c;border-radius:3px;"></div>
<div style="left:1351px;top:170px;width:15px;height:598px;background:#dedede;border-left:1px solid #ababab;"></div>
<div style="left:1355.8px;top:180.8px;width:6px;height:508.2px;background:#7c7c7c;border-radius:3px;"></div>
</div>

</body>
</html>
